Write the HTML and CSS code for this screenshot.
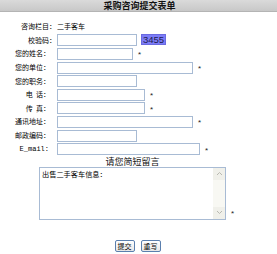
FILE: index.html
```html
<!DOCTYPE html>
<html lang="zh">
<head>
<meta charset="utf-8">
<title>采购咨询提交表单</title>
<link rel="stylesheet" href="styles.css">
</head>
<body>
<div class="header">采购咨询提交表单</div>
<div class="form">
  <div class="row"><span class="label wide">咨询栏目：</span><span class="value">二手客车</span></div>
  <div class="row"><span class="label wide">校验码：</span><span class="input w80"></span><span class="code">3455</span></div>
  <div class="row"><span class="label">您的姓名：</span><span class="input w76"></span><span class="star">*</span></div>
  <div class="row"><span class="label">您的单位：</span><span class="input w136"></span><span class="star">*</span></div>
  <div class="row"><span class="label">您的职务：</span><span class="input w80"></span></div>
  <div class="row"><span class="label">电&nbsp;&nbsp;话：</span><span class="input w88"></span><span class="star">*</span></div>
  <div class="row"><span class="label">传&nbsp;&nbsp;真：</span><span class="input w88"></span><span class="star">*</span></div>
  <div class="row"><span class="label">通讯地址：</span><span class="input w136"></span><span class="star">*</span></div>
  <div class="row"><span class="label">邮政编码：</span><span class="input w80"></span></div>
  <div class="row"><span class="label mono">E_mail:</span><span class="input w143"></span><span class="star">*</span></div>
</div>
<div class="message">
  <div class="msg-title">请您简短留言</div>
  <div class="msg-row">
    <div class="textarea">
      <div class="ta-text">出售二手客车信息：</div>
      <div class="ta-bar">
        <span class="ta-btn">
          <svg width="7" height="5" viewBox="0 0 7 5"><path d="M1 4 L3.5 1.5 L6 4" fill="none" stroke="#b8b8b0" stroke-width="1"/></svg>
        </span>
        <span class="ta-track"></span>
        <span class="ta-btn">
          <svg width="7" height="5" viewBox="0 0 7 5"><path d="M1 1 L3.5 3.5 L6 1" fill="none" stroke="#b8b8b0" stroke-width="1"/></svg>
        </span>
      </div>
    </div>
    <span class="star">*</span>
  </div>
</div>
<div class="buttons">
  <span class="btn">提交</span>
  <span class="btn">重写</span>
</div>
</body>
</html>
```

FILE: styles.css
```css
* { box-sizing: border-box; }
body {
  margin: 0;
  width: 277px;
  height: 254px;
  background: #fff;
  color: #000;
  font-family: "Noto Sans CJK SC", "Liberation Sans", sans-serif;
  font-size: 7px;
  overflow: hidden;
}
.header {
  height: 12px;
  background: linear-gradient(#dadada, #c8c8c8);
  border-bottom: 1px solid #b4b4b4;
  text-align: center;
  font-weight: bold;
  font-size: 9px;
  line-height: 11px;
  color: #111;
  padding-left: 2px;
}
.form {
  margin-top: 8px;
  display: flex;
  flex-direction: column;
}
.row {
  height: 13.6px;
  display: flex;
  align-items: center;
}
.label {
  width: 57px;
  text-align: right;
  padding-right: 7px;
  white-space: nowrap;
  line-height: 1;
}
.label.wide { padding-right: 1px; }
.label.mono {
  font-family: "Liberation Mono", "DejaVu Sans Mono", monospace;
  padding-right: 8px;
}
.value { line-height: 1; }
.input {
  display: block;
  height: 12px;
  border: 1px solid #a8bbd4;
  background: #fff;
}
.w76 { width: 76px; }
.w80 { width: 80px; }
.w88 { width: 88px; }
.w136 { width: 136px; }
.w143 { width: 143px; }
.star {
  margin-left: 5px;
  font-family: "Liberation Sans", sans-serif;
  font-size: 8px;
  line-height: 1;
  color: #222;
  padding-top: 3px;
}
.code {
  margin-left: 4px;
  margin-top: -2px;
  width: 25px;
  height: 11px;
  background: #7c7cf8;
  border: 1px solid #6a6ae0;
  color: #1c1c50;
  font-family: "Liberation Sans", sans-serif;
  font-size: 9.5px;
  line-height: 9px;
  text-align: center;
}
.message {
  margin-left: 39px;
  width: 200px;
}
.msg-title {
  width: 187px;
  text-align: center;
  font-size: 9px;
  line-height: 11px;
  height: 10.6px;
  color: #111;
}
.msg-row {
  display: flex;
  align-items: flex-end;
}
.textarea {
  width: 187px;
  height: 53px;
  border: 1px solid #a8bbd4;
  display: flex;
  background: #fff;
}
.ta-text {
  flex: 1;
  padding: 2px 2px;
  line-height: 1.2;
  color: #000;
  font-size: 7.2px;
}
.ta-bar {
  width: 12px;
  background: #f8f8f3;
  display: flex;
  flex-direction: column;
}
.ta-btn {
  height: 12px;
  background: #f0f0ea;
  display: flex;
  align-items: center;
  justify-content: center;
}
.ta-track { flex: 1; }
.msg-row .star {
  margin-left: 5px;
  padding-bottom: 2px;
}
.buttons {
  margin-top: 20px;
  display: flex;
  justify-content: center;
  gap: 6px;
  padding-right: 2px;
}
.btn {
  width: 20px;
  height: 12px;
  border: 1px solid #5b7fae;
  border-radius: 2px;
  background: linear-gradient(#ffffff, #e6e6e6);
  font-size: 7px;
  line-height: 10px;
  text-align: center;
  color: #000;
}
```
